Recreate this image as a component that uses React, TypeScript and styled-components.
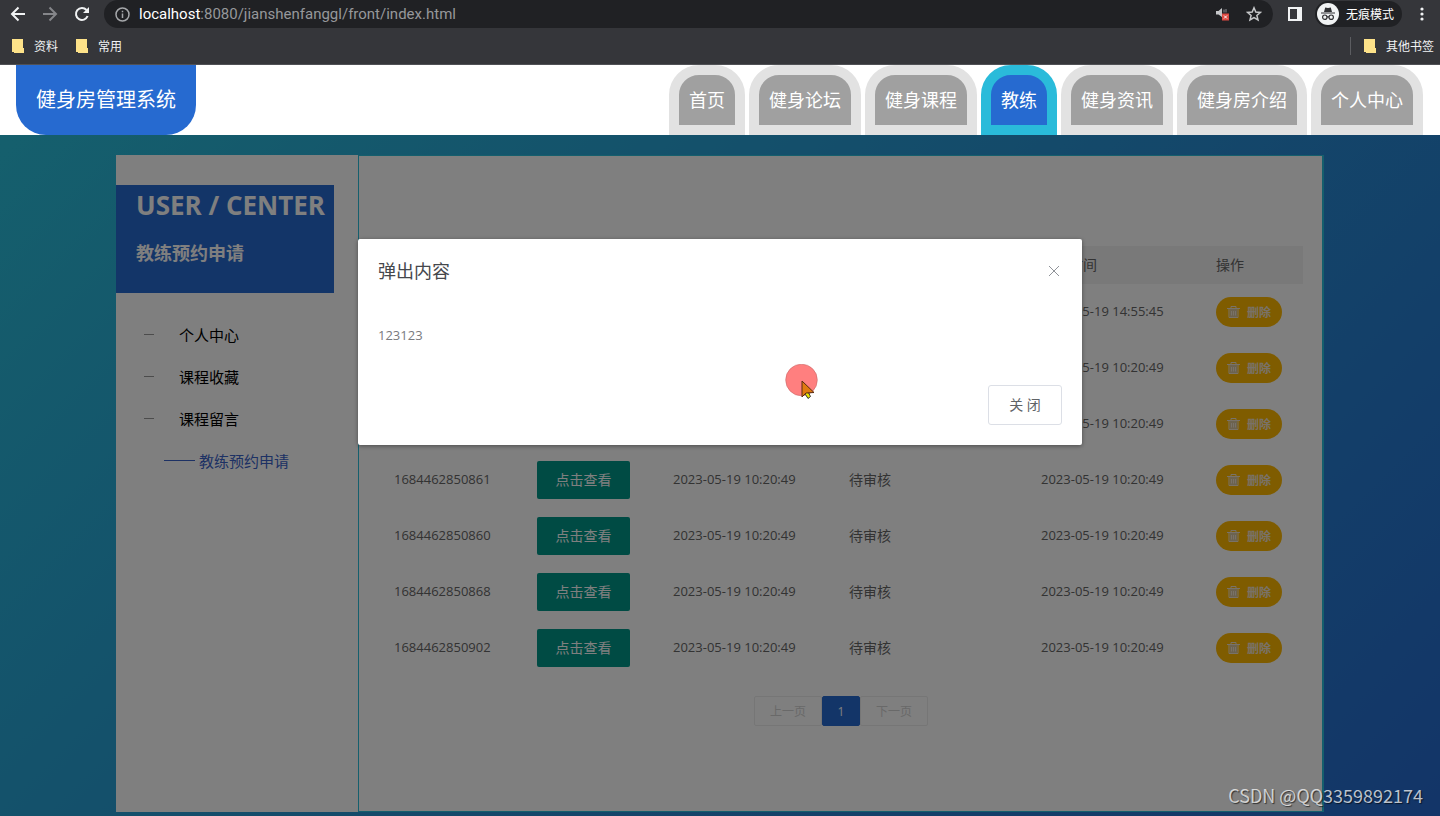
import React from "react";
import styled, { createGlobalStyle } from "styled-components";

const Global = createGlobalStyle`
  * { box-sizing: border-box; }
  html, body, #root { height: 100%; }
  body { margin: 0; font-family: "Open Sans", "Noto Sans CJK SC", sans-serif; font-size: 14px; }
  button, input { font: inherit; }
  ul { list-style: none; margin: 0; padding: 0; }
  a { color: inherit; text-decoration: none; }
  h2, h3, p { margin: 0; }
`;

const Screen = styled.div`
  min-height: 100%;
  display: flex;
  flex-direction: column;
  position: relative;
`;

/* Browser frame */
const Toolbar = styled.div`
  height: 28px;
  background: #35363a;
  display: flex;
  align-items: center;
  padding: 0 10px;
  color: #fff;
`;
const IconButton = styled.button<{ $dim?: boolean }>`
  width: 16px;
  height: 16px;
  padding: 0;
  border: 0;
  background: none;
  display: flex;
  flex: none;
  color: ${(p) => (p.$dim ? "#85868a" : "#f1f3f4")};
`;
const NavButtons = styled.div`
  display: flex;
  gap: 16px;
  margin-right: 14px;
`;
const AddressBar = styled.div`
  flex: 1;
  height: 28px;
  border-radius: 14px;
  background: #202124;
  display: flex;
  align-items: center;
  gap: 9px;
  padding: 0 11px;
`;
const Address = styled.div`
  flex: 1;
  color: #96989b;
  font-family: Roboto, sans-serif;
  font-size: 15px;
  line-height: 20px;
  b { font-weight: 400; color: #fff; }
`;
const AddressTools = styled.div`
  display: flex;
  gap: 15px;
`;
const BrowserTools = styled.div`
  display: flex;
  align-items: center;
  gap: 12px;
  margin-left: 14px;
`;
const Incognito = styled.div`
  height: 26px;
  border-radius: 13px;
  background: #202124;
  display: flex;
  align-items: center;
  gap: 7px;
  padding: 0 8px 0 2px;
  font-size: 12px;
`;
const Bookmarks = styled.div`
  height: 37px;
  background: #35363a;
  border-bottom: 1px solid #505155;
  display: flex;
  align-items: center;
  gap: 18px;
  padding: 0 6px 0 12px;
  color: #f1f3f4;
  font-size: 12px;
`;
const Bookmark = styled.a`
  display: flex;
  align-items: center;
  gap: 10px;
`;
const OtherBookmarks = styled(Bookmark)`
  margin-left: auto;
  border-left: 1px solid #5c5d61;
  padding-left: 13px;
`;

/* Site header */
const Header = styled.header`
  height: 70px;
  background: #fff;
  display: flex;
  justify-content: space-between;
  padding: 0 17px 0 16px;
`;
const Logo = styled.div`
  background: #266ad0;
  color: #fff;
  font-size: 20px;
  line-height: 70px;
  padding: 0 20px;
  border-radius: 0 0 30px 30px;
`;
const Menu = styled.nav`
  display: flex;
  gap: 4px;
`;
const MenuItem = styled.a<{ $active?: boolean }>`
  border: 10px solid ${(p) => (p.$active ? "#2abbda" : "#e2e2e2")};
  border-radius: 30px 30px 0 0;
  background: ${(p) => (p.$active ? "#266ad0" : "#a0a0a0")};
  color: #fff;
  font-size: 18px;
  line-height: 50px;
  padding: 0 10px;
`;

/* Page body */
const Main = styled.main`
  flex: 1;
  position: relative;
  padding: 20px 20px 4px;
  display: flex;
  justify-content: center;
  background: linear-gradient(135deg, #2abfda 0%, #266ad0 100%);
`;
const Layout = styled.div`
  flex: 1;
  max-width: 1208px;
  display: flex;
  background: #fff;
`;
const Sidebar = styled.aside`
  width: 242px;
  flex: none;
  padding-top: 30px;
`;
const SideTitle = styled.div`
  width: 218px;
  height: 108px;
  background: #266ad0;
  color: #fff;
  padding-left: 20px;
  h2 { font-size: 26px; line-height: 40px; white-space: nowrap; }
  h3 { font-size: 18px; line-height: 56px; }
`;
const SideMenu = styled.ul`
  margin-top: 20px;
`;
const SideLink = styled.a<{ $active?: boolean }>`
  display: flex;
  align-items: center;
  height: 42px;
  padding-left: ${(p) => (p.$active ? 48 : 28)}px;
  gap: ${(p) => (p.$active ? 4 : 25)}px;
  font-size: 15px;
  color: ${(p) => (p.$active ? "#3a62c8" : "#000")};
  &::before {
    content: "";
    width: ${(p) => (p.$active ? 31 : 10)}px;
    height: 1px;
    background: ${(p) => (p.$active ? "#3a62c8" : "#999")};
  }
`;
const Content = styled.section`
  flex: 1;
  border: 1px solid #2abfda;
  border-right-width: 2px;
  padding: 90px 19px 20px 20px;
`;
const Table = styled.table`
  width: 100%;
  border-collapse: collapse;
  table-layout: fixed;
  color: #666;
  th, td { text-align: left; font-weight: 400; padding: 0 15px; white-space: nowrap; }
  th { height: 38px; padding-bottom: 2px; background: #f2f2f2; }
  td { height: 56px; }
`;
const CellText = styled.span<{ $numeric?: boolean }>`
  display: block;
  padding-bottom: 2px;
  font-size: ${(p) => (p.$numeric ? 13 : 14)}px;
`;
const ViewButton = styled.button`
  display: block;
  width: 93px;
  height: 38px;
  border: 0;
  border-radius: 2px;
  background: #009688;
  color: #fff;
  padding: 0 0 2px;
`;
const DeleteButton = styled.button`
  display: flex;
  align-items: center;
  justify-content: center;
  gap: 7px;
  width: 66px;
  height: 30px;
  border: 0;
  border-radius: 15px;
  background: #ffb800;
  color: #f2e4d0;
  font-size: 12px;
  font-weight: 700;
  padding: 0;
`;
const Pager = styled.div`
  display: flex;
  justify-content: center;
  margin-top: 20px;
`;
const PageButton = styled.button<{ $current?: boolean }>`
  width: ${(p) => (p.$current ? 38 : 68)}px;
  height: 30px;
  border: 1px solid ${(p) => (p.$current ? "#266ad0" : "#ececec")};
  border-radius: 2px;
  background: ${(p) => (p.$current ? "#266ad0" : "none")};
  color: ${(p) => (p.$current ? "#fff" : "#d2d2d2")};
  font-size: 12px;
  padding: 0;
`;

/* Dialog */
const Shade = styled.div`
  position: absolute;
  inset: 0;
  background: rgba(0, 0, 0, 0.5);
  display: flex;
  justify-content: center;
  align-items: flex-start;
  padding: 104px 20px 0;
`;
const Dialog = styled.div`
  width: 724px;
  background: #fff;
  border-radius: 2px;
  box-shadow: 0 1px 4px rgba(0, 0, 0, 0.4);
  padding: 20px;
`;
const DialogHead = styled.div`
  display: flex;
  justify-content: space-between;
  align-items: center;
  height: 22px;
  h2 { font-size: 18px; font-weight: 400; color: #45474c; }
`;
const DialogText = styled.p`
  color: #7a7a7e;
  font-size: 13px;
  line-height: 24px;
  margin: 42px 0 38px;
`;
const DialogFoot = styled.div`
  display: flex;
  justify-content: flex-end;
`;
const CloseButton = styled.button`
  width: 74px;
  height: 40px;
  border: 1px solid #dcdfe6;
  border-radius: 3px;
  background: #fff;
  color: #606266;
  padding: 0 0 2px;
`;
const Pointer = styled.svg`
  position: absolute;
  left: 785px;
  top: 364px;
`;
const Watermark = styled.div`
  position: absolute;
  right: 17px;
  bottom: 8px;
  font-family: "Noto Sans CJK SC", sans-serif;
  font-size: 18px;
  line-height: 26px;
  color: rgba(255, 255, 255, 0.72);
  text-shadow: 1px 1px 1px rgba(0, 0, 0, 0.6);
`;

const Folder = () => (
  <svg width="12" height="14" viewBox="0 0 12 14">
    <path d="M0 0h11v9h1v5H2v-1H0z" fill="#fde289" />
  </svg>
);
const Trash = () => (
  <svg width="13" height="12" viewBox="0 0 13 12" fill="none" stroke="#f2e4d0">
    <path d="M3 3h7v8H3z" fill="#d8c6a0" stroke="none" />
    <path d="M0 2.5h13M4 2V.5h5V2M2 3v8.5h9V3M4.500 5v4.500M6.500 5v4.500M8.500 5v4.500" />
  </svg>
);

const stroke = { fill: "none", stroke: "currentColor", strokeWidth: 2 };

const menu = ["首页", "健身论坛", "健身课程", "教练", "健身资讯", "健身房介绍", "个人中心"];
const side = ["个人中心", "课程收藏", "课程留言", "教练预约申请"];
const columns: [string, number][] = [
  ["", 143],
  ["内容", 136],
  ["预约时间", 176],
  ["审核状态", 96],
  ["审核回复", 96],
  ["创建时间", 175],
  ["操作", 102],
];
const rows = [
  ["1684479345213", "2023-05-19 14:55:45"],
  ["1684462850875", "2023-05-19 10:20:49"],
  ["1684462850894", "2023-05-19 10:20:49"],
  ["1684462850861", "2023-05-19 10:20:49"],
  ["1684462850860", "2023-05-19 10:20:49"],
  ["1684462850868", "2023-05-19 10:20:49"],
  ["1684462850902", "2023-05-19 10:20:49"],
];

export default function App() {
  return (
    <Screen>
      <Global />
      <Toolbar>
        <NavButtons>
          <IconButton aria-label="后退">
            <svg width="16" height="16" viewBox="0 0 16 16" {...stroke}>
              <path d="M15 8H2M8.500 1.500L2 8l6.500 6.500" />
            </svg>
          </IconButton>
          <IconButton aria-label="前进" $dim>
            <svg width="16" height="16" viewBox="0 0 16 16" {...stroke}>
              <path d="M1 8h13M7.500 1.500L14 8l-6.500 6.500" />
            </svg>
          </IconButton>
          <IconButton aria-label="刷新">
            <svg width="16" height="16" viewBox="0 0 16 16" {...stroke}>
              <path d="M13.600 10A6 6 0 1 1 12.500 4" />
              <path d="M15 1v6H9z" fill="currentColor" stroke="none" />
            </svg>
          </IconButton>
        </NavButtons>
        <AddressBar>
          <svg width="15" height="15" viewBox="0 0 15 15" fill="none" stroke="#a5a7aa" strokeWidth="1.500">
            <circle cx="7.500" cy="7.500" r="6.500" />
            <path d="M7.500 6.500V11M7.500 3.800v1.500" />
          </svg>
          <Address>
            <b>localhost</b>:8080/jianshenfanggl/front/index.html
          </Address>
          <AddressTools>
            <IconButton aria-label="已静音">
              <svg width="16" height="16" viewBox="0 0 16 16">
                <path d="M1 5h2.500L7 2v9L3.500 8.500H1z" fill="#c6c8ca" />
                <path d="M9 3.500v3M11 3v3.500" stroke="#8d8f92" />
                <path d="M7 7.500h7v7H7z" fill="#dc4a42" />
                <path d="M9 9.500l3 3M12 9.500l-3 3" stroke="#fff" />
              </svg>
            </IconButton>
            <IconButton aria-label="收藏">
              <svg width="16" height="16" viewBox="0 0 16 16" fill="none" stroke="#c6c8ca" strokeWidth="1.500">
                <path d="M8 1.800l1.800 4.200 4.600.4-3.500 3 1.100 4.500L8 11.500l-4 2.400 1.100-4.500-3.500-3 4.600-.4z" />
              </svg>
            </IconButton>
          </AddressTools>
        </AddressBar>
        <BrowserTools>
          <IconButton aria-label="侧边栏">
            <svg width="16" height="16" viewBox="0 0 16 16">
              <path d="M1 1h14v14H1zM3 3v10h7V3z" fill="#f1f3f4" fillRule="evenodd" />
            </svg>
          </IconButton>
          <Incognito>
            <svg width="22" height="22" viewBox="0 0 22 22">
              <circle cx="11" cy="11" r="11" fill="#f1f3f4" />
              <path d="M4 9.500h14v1H4zM7 9l1.200-4.500L11 5l2.800-.5L15 9z" fill="#303134" />
              <g fill="none" stroke="#303134" strokeWidth="1.200">
                <circle cx="7.800" cy="14.200" r="2.200" />
                <circle cx="14.200" cy="14.200" r="2.200" />
                <path d="M10 13.800h2" />
              </g>
            </svg>
            无痕模式
          </Incognito>
          <IconButton aria-label="菜单">
            <svg width="16" height="16" viewBox="0 0 16 16" fill="#f1f3f4">
              <circle cx="8" cy="3" r="1.600" />
              <circle cx="8" cy="8" r="1.600" />
              <circle cx="8" cy="13" r="1.600" />
            </svg>
          </IconButton>
        </BrowserTools>
      </Toolbar>
      <Bookmarks>
        <Bookmark href="#"><Folder />资料</Bookmark>
        <Bookmark href="#"><Folder />常用</Bookmark>
        <OtherBookmarks href="#"><Folder />其他书签</OtherBookmarks>
      </Bookmarks>
      <Header>
        <Logo>健身房管理系统</Logo>
        <Menu>
          {menu.map((m) => (
            <MenuItem key={m} href="#" $active={m === "教练"}>{m}</MenuItem>
          ))}
        </Menu>
      </Header>
      <Main>
        <Layout>
          <Sidebar>
            <SideTitle>
              <h2>USER / CENTER</h2>
              <h3>教练预约申请</h3>
            </SideTitle>
            <SideMenu>
              {side.map((s) => (
                <li key={s}>
                  <SideLink href="#" $active={s === "教练预约申请"}>{s}</SideLink>
                </li>
              ))}
            </SideMenu>
          </Sidebar>
          <Content>
            <Table>
              <colgroup>
                {columns.map(([name, w]) => (
                  <col key={name} style={{ width: w }} />
                ))}
              </colgroup>
              <thead>
                <tr>
                  {columns.map(([name]) => (
                    <th key={name}>{name}</th>
                  ))}
                </tr>
              </thead>
              <tbody>
                {rows.map(([id, time]) => (
                  <tr key={id}>
                    <td><CellText $numeric>{id}</CellText></td>
                    <td><ViewButton>点击查看</ViewButton></td>
                    <td><CellText $numeric>{time}</CellText></td>
                    <td><CellText>待审核</CellText></td>
                    <td />
                    <td><CellText $numeric>{time}</CellText></td>
                    <td><DeleteButton><Trash />删除</DeleteButton></td>
                  </tr>
                ))}
              </tbody>
            </Table>
            <Pager>
              <PageButton disabled>上一页</PageButton>
              <PageButton $current>1</PageButton>
              <PageButton disabled>下一页</PageButton>
            </Pager>
          </Content>
        </Layout>
        <Shade>
          <Dialog role="dialog" aria-labelledby="dialog-title">
            <DialogHead>
              <h2 id="dialog-title">弹出内容</h2>
              <IconButton aria-label="关闭弹窗">
                <svg width="16" height="16" viewBox="0 0 16 16" fill="none" stroke="#909399">
                  <path d="M3 4l10 10M13 4L3 14" />
                </svg>
              </IconButton>
            </DialogHead>
            <DialogText>123123</DialogText>
            <DialogFoot>
              <CloseButton>关 闭</CloseButton>
            </DialogFoot>
          </Dialog>
        </Shade>
      </Main>
      <Pointer width="34" height="36" viewBox="0 0 34 36">
        <circle cx="16.500" cy="16" r="15.800" fill="#ff7f7f" stroke="#c96a6a" strokeWidth=".6" />
        <path d="M20.500 29l2-2 3 5.500-2.500 2-2.500-4z" fill="#e6e600" stroke="#333" />
        <path d="M17 17v16l4-4 8-.5z" fill="#e07a10" stroke="#5a2a10" />
      </Pointer>
      <Watermark>CSDN @QQ3359892174</Watermark>
    </Screen>
  );
}
